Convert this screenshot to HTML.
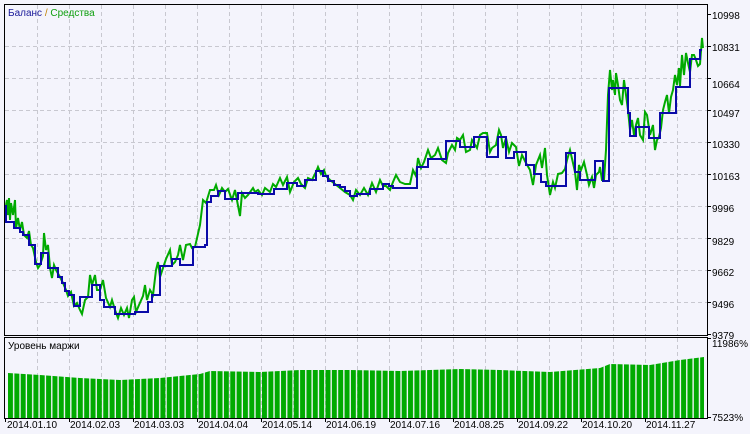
<!DOCTYPE html>
<html><head><meta charset="utf-8"><style>
body{margin:0;background:#f4f4fc;width:750px;height:434px;overflow:hidden;font-family:"Liberation Sans",sans-serif}
</style></head><body>
<svg width="750" height="434" xmlns="http://www.w3.org/2000/svg" style="position:absolute;left:0;top:0">
<rect width="750" height="434" fill="#f4f4fc"/>
<g stroke="#c8c8d0" stroke-width="1" stroke-dasharray="4,3" fill="none">
<path d="M37.5 5V335M69.5 5V335M101.5 5V335M133.5 5V335M165.5 5V335M197.5 5V335M229.5 5V335M261.5 5V335M293.5 5V335M325.5 5V335M357.5 5V335M389.5 5V335M421.5 5V335M453.5 5V335M485.5 5V335M517.5 5V335M549.5 5V335M581.5 5V335M613.5 5V335M645.5 5V335M677.5 5V335"/>
<path d="M5 46.5H707M5 78.5H707M5 110.5H707M5 142.5H707M5 174.5H707M5 206.5H707M5 238.5H707M5 270.5H707M5 302.5H707"/>
<path d="M37.5 338V418M69.5 338V418M101.5 338V418M133.5 338V418M165.5 338V418M197.5 338V418M229.5 338V418M261.5 338V418M293.5 338V418M325.5 338V418M357.5 338V418M389.5 338V418M421.5 338V418M453.5 338V418M485.5 338V418M517.5 338V418M549.5 338V418M581.5 338V418M613.5 338V418M645.5 338V418M677.5 338V418"/>
</g>
<defs><pattern id="bp" x="8" y="0" width="6.35" height="10" patternUnits="userSpaceOnUse"><rect width="5" height="10" fill="#00aa00"/></pattern></defs>
<polygon fill="url(#bp)" points="8,373 40,375 80,378 120,380 160,378 200,374 210,371 260,372 300,370 350,370 400,371 460,369 500,370 550,372 600,368 610,364 650,365 680,360 704,357 704,418 8,418"/>
<polyline fill="none" stroke="#00aa00" stroke-width="2" points="6,205 7,200 8,215 9,198 10,220 11,203 13,215 15,200 16,228 18,218 20,230 22,222 24,235 27,238 29,231 31,245 33,248 36,262 38,268 40,265 43,256 44,233 46,250 48,245 50,268 52,278 54,265 56,270 60,277 63,283 66,290 68,296 71,292 74,306 77,303 80,310 82,314 85,300 88,297 90,275 92,285 95,275 97,290 100,290 103,280 106,298 110,307 112,300 115,310 118,318 121,308 124,315 127,308 129,318 132,300 134,297 136,312 139,305 143,296 145,285 147,300 150,290 153,295 156,270 158,262 160,277 163,268 166,259 170,250 172,265 175,262 178,255 180,245 183,260 186,245 190,244 192,248 195,247 200,225 203,200 206,203 210,190 214,190 216,185 219,195 222,188 225,192 228,189 232,200 235,190 240,216 242,193 245,198 248,195 253,188 255,192 258,190 262,195 265,188 270,192 273,184 276,187 280,178 283,185 287,177 290,192 294,182 298,178 301,184 305,188 308,178 312,180 316,172 318,167 321,174 324,170 326,176 330,180 335,184 340,188 345,192 350,195 353,200 356,190 360,195 364,188 368,195 372,183 376,192 380,180 383,186 386,186 390,190 393,182 396,175 400,182 405,184 410,184 413,170 416,176 418,158 421,168 424,162 428,150 431,158 435,155 438,148 442,160 446,163 448,153 452,145 455,150 457,138 460,140 463,135 466,152 470,150 472,140 477,148 480,135 483,133 487,133 490,152 492,148 496,145 499,130 501,135 503,148 506,138 509,152 512,143 516,147 519,166 522,155 526,163 530,170 533,185 536,165 540,155 542,168 545,148 547,175 550,195 553,182 555,188 558,174 562,173 565,169 567,160 570,150 573,163 575,172 577,190 579,165 581,170 584,162 587,175 589,185 592,177 594,188 596,175 599,172 600,167 602,180 604,180 606,150 608,95 610,70 612,90 613,80 615,95 616,73 618,85 620,100 622,105 624,80 626,95 628,110 630,130 632,120 634,135 636,125 638,118 640,135 643,140 645,112 647,115 650,135 653,125 655,150 657,140 659,137 661,128 663,110 665,102 667,95 669,113 671,97 673,90 675,75 677,85 679,68 680,86 682,55 684,75 686,53 688,63 690,72 692,55 694,55 696,60 698,66 700,64 702,38 703,48"/>
<path fill="none" stroke="#0a0aa8" stroke-width="2" d="M6 205V222H14V228H20V232H23V235H29V245H35V264H41V253H48V268H58V277H62V283H65V291H69V295H74V306H80V297H92V285H100V300H104V307H115V314H135V312H148V302H152V295H160V266H172V259H180V265H193V247H205V245H207V202H211V196H218V191H225V199H238V193H258V194H274V189H287V183H297V186H305V180H316V171H323V176H328V181H334V185H340V187H345V191H350V196H357V194H370V189H383V184H389V186H393V188H417V167H428V159H446V141H460V147H474V137H487V157H498V137H506V158H514V152H526V165H534V174H541V182H546V186H566V153H575V172H580V180H595V161H603V181H609V88H628V113H630V136H636V127H649V138H660V113H676V87H690V59H700V50H702"/>
<rect x="4.5" y="4.5" width="703" height="331" fill="none" stroke="#000" stroke-width="1"/>
<rect x="4.5" y="337.5" width="703" height="81" fill="none" stroke="#000" stroke-width="1"/>
<g stroke="#000"><path d="M707 14.5h4M707 46.5h4M707 78.5h4M707 110.5h4M707 142.5h4M707 174.5h4M707 206.5h4M707 238.5h4M707 270.5h4M707 302.5h4M707 334.5h4M707 338.5h4M707 417.5h4"/>
<path d="M5.5 418v4M69.5 418v4M133.5 418v4M197.5 418v4M261.5 418v4M325.5 418v4M389.5 418v4M453.5 418v4M517.5 418v4M581.5 418v4M645.5 418v4"/></g>
<g font-size="10" fill="#000" font-family="Liberation Sans, sans-serif">
<text x="712" y="19">10998</text><text x="712" y="51">10831</text><text x="712" y="88">10664</text><text x="712" y="117">10497</text><text x="712" y="148">10330</text><text x="712" y="180">10163</text><text x="712" y="212">9996</text><text x="712" y="245">9829</text><text x="712" y="276">9662</text><text x="712" y="308">9496</text><text x="712" y="339">9379</text>
<text x="712" y="347">11986%</text><text x="712" y="421">7523%</text>
<text x="7" y="428">2014.01.10</text><text x="70" y="428">2014.02.03</text><text x="134" y="428">2014.03.03</text><text x="198" y="428">2014.04.04</text><text x="262" y="428">2014.05.14</text><text x="326" y="428">2014.06.19</text><text x="390" y="428">2014.07.16</text><text x="454" y="428">2014.08.25</text><text x="518" y="428">2014.09.22</text><text x="582" y="428">2014.10.20</text><text x="646" y="428">2014.11.27</text>
<text x="8" y="349">Уровень маржи</text>
<text x="8" y="16"><tspan fill="#1a1a9a">Баланс</tspan> <tspan fill="#c08000">/</tspan> <tspan fill="#10a010">Средства</tspan></text>
</g>
</svg>
</body></html>
